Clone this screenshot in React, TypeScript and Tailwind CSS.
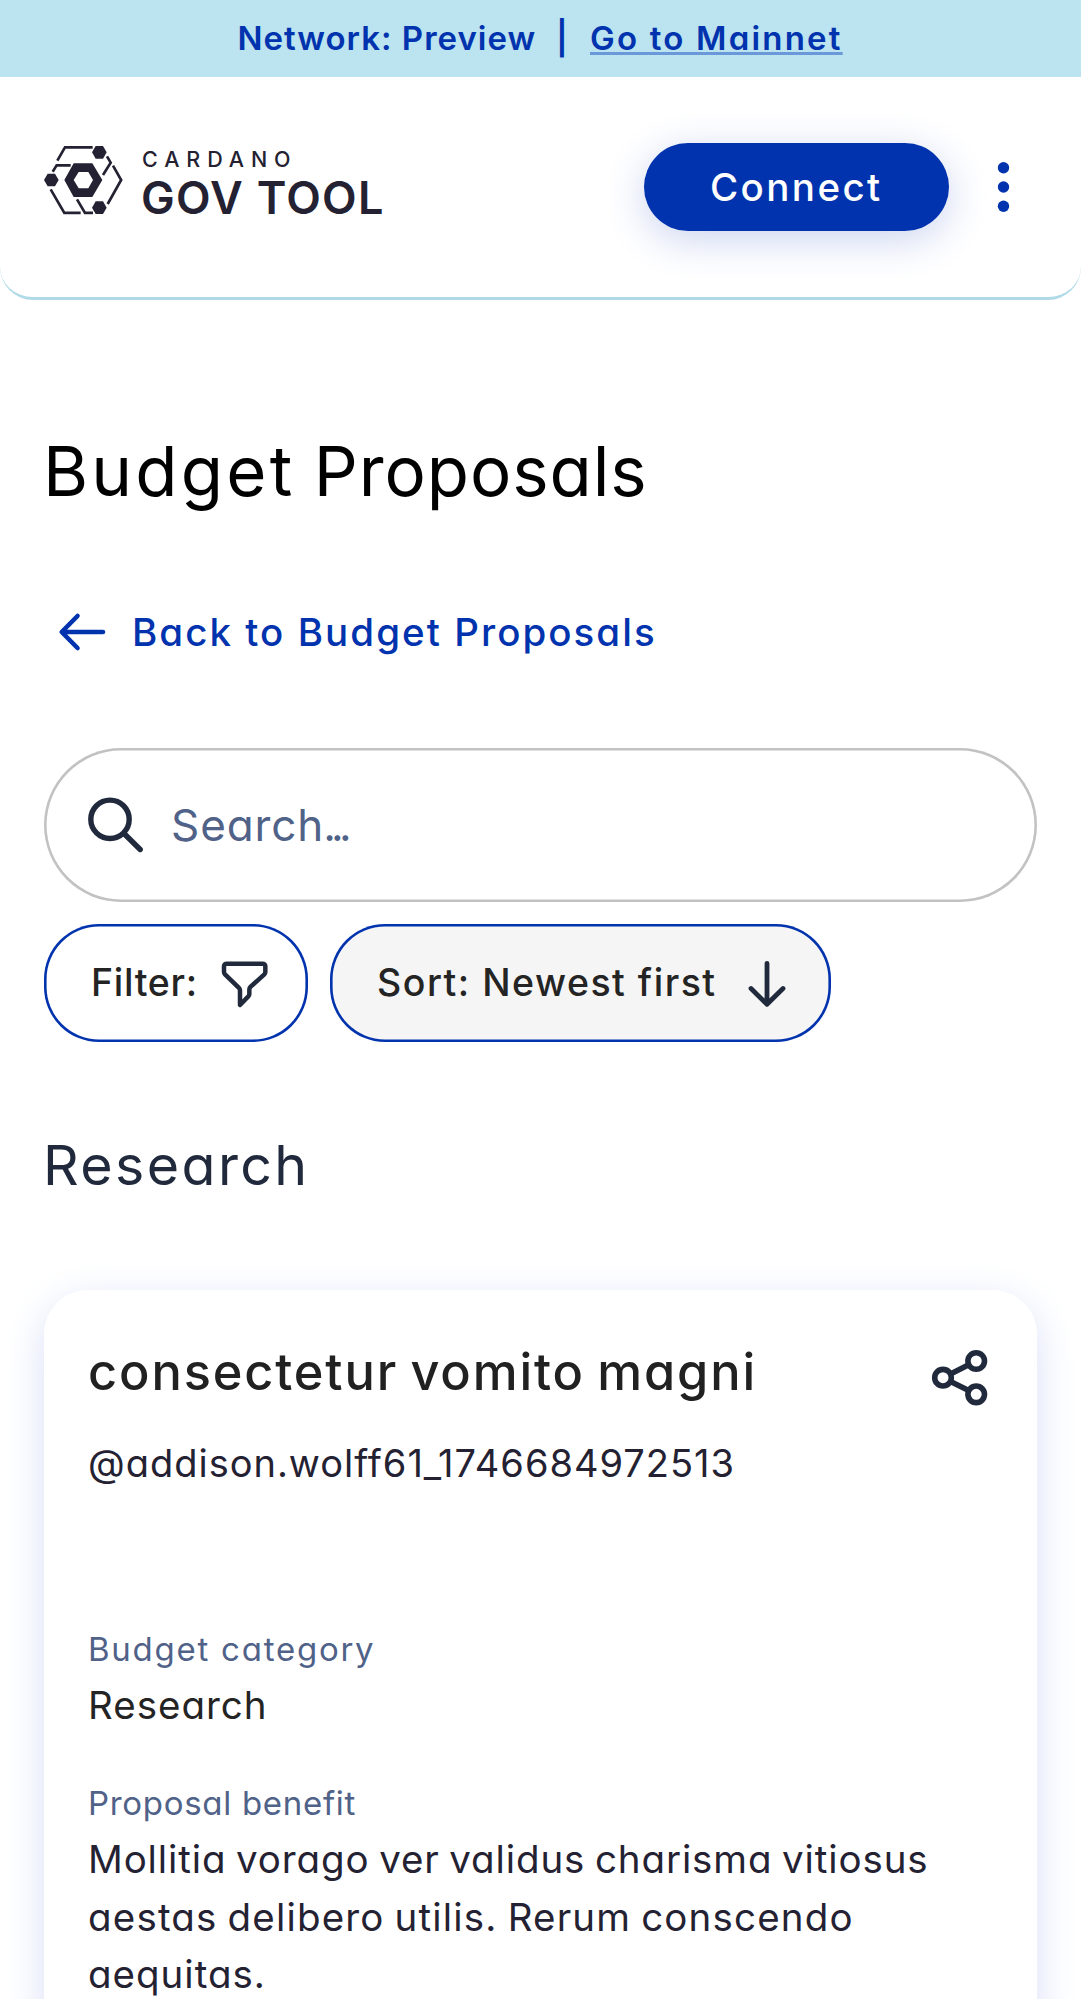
import React from "react";

function LogoMark() {
  return (
    <svg className="h-[80px] w-[86px] shrink-0" viewBox="12 0 258 240" fill="none" stroke="#242232" strokeWidth="8">
      <path d="M52 62 L75 22 H158" />
      <path d="M201 49 L212 68 L189 105" />
      <path d="M38 95 L50 76 H92" />
      <path d="M219 77 L243.500 120 L203 192" />
      <path d="M32 148 L73 218.500 H122" />
      <path d="M111 178 L135 218.500 H159" />
      <g fill="#242232" stroke="none">
        <path d="M156 37 L167 18 H189 L200 37 L189 56 H167 Z" />
        <path d="M156 203 L167 184 H189 L200 203 L189 222 H167 Z" />
        <path d="M12 120 L23 101 H45 L56 120 L45 139 H23 Z" />
        <path
          fillRule="evenodd"
          d="M73 120 L101 70 H157 L187 120 L157 171 H101 Z M101 120 L116 145 H145 L159 120 L145 96 H116 Z"
        />
      </g>
    </svg>
  );
}

function SearchIcon() {
  return (
    <svg className="h-[57px] w-[57px] shrink-0" viewBox="0 0 57 57" fill="none" stroke="#212a3d" strokeWidth="5.4" strokeLinecap="round">
      <circle cx="23" cy="23.300" r="19.200" />
      <path d="M37.500 38 L53.200 53.500" />
    </svg>
  );
}

function FunnelIcon() {
  return (
    <svg className="h-[65px] w-[60px] shrink-0" viewBox="0 0 180 195" fill="none" stroke="#212a3d" strokeWidth="13.500" strokeLinejoin="round">
      <path d="M35 41 H143 a8 8 0 0 1 8 8 V66 q0 4 -3 7 L107 110 q-4 4 -4 8 V132 q0 4 -3 7 L75 165 V121 q0 -4 -4 -8 L30 73 q-3 -3 -3 -7 V49 a8 8 0 0 1 8 -8 Z" />
    </svg>
  );
}

function ShareIcon() {
  return (
    <svg className="h-[57px] w-[57px] shrink-0" viewBox="0 0 57 57" fill="none" stroke="#212a3d" strokeWidth="5.6">
      <circle cx="12" cy="28.700" r="8.300" />
      <circle cx="45.200" cy="12" r="8.300" />
      <circle cx="45.200" cy="45.300" r="8.300" />
      <path d="M19.500 25 L37.700 15.800 M19.500 32.500 L37.700 41.500" />
    </svg>
  );
}

export default function App() {
  return (
    <div className="h-[1999px] w-[1081px] overflow-hidden bg-white font-['Inter',sans-serif] [font-feature-settings:'cv11'_1] whitespace-nowrap text-[#242232]">
      <div className="flex h-[77px] items-center bg-[#bbe3f0] pl-[237.5px] text-[33px] leading-[77px] font-semibold text-[#0033ad]">
        <span className="w-[318.500px] tracking-[1px]">Network: Preview</span>
        <span className="w-[34px]">|</span>
        <a className="tracking-[2.2px] underline decoration-[#6a98d8] decoration-[2.75px] underline-offset-[2px] [text-decoration-skip-ink:none]">
          Go to Mainnet
        </a>
      </div>

      <header className="flex h-[222.750px] items-start justify-between rounded-b-[33px] border-b-[3px] border-[#b0dae7] pr-[66px] pl-[44px]">
        <div className="flex pt-[63px]">
          <LogoMark />
          <div className="ml-[11px] pt-[7px]">
            <div className="h-[24px] pl-[1px] text-[21.500px] leading-[24px] font-medium tracking-[6.9px]">CARDANO</div>
            <div className="mt-[5px] h-[44px] text-[45px] leading-[44px] font-semibold tracking-[1.25px]">GOV TOOL</div>
          </div>
        </div>
        <div className="flex items-center pt-[65.750px]">
          <button className="flex h-[88px] w-[305.500px] items-center justify-center rounded-full bg-[#0033ad] pt-[2px] text-[38.500px] font-medium tracking-[2.4px] text-white shadow-[0_9px_41px_#ccd5f0]">
            Connect
          </button>
          <svg className="ml-[43px] h-[52px] w-[23px]" viewBox="0 0 23 52" fill="#0033ad">
            <circle cx="11.500" cy="6.800" r="5.700" />
            <circle cx="11.500" cy="26" r="5.700" />
            <circle cx="11.500" cy="45.300" r="5.700" />
          </svg>
        </div>
      </header>

      <main className="px-[44px]">
        <h1 className="mt-[131px] -ml-[1px] h-[80px] text-[69px] leading-[80px] text-black [word-spacing:-2px]">
          <span className="tracking-[3.2px]">Budget</span>
          <span className="tracking-[0.9px]"> Proposals</span>
        </h1>

        <a className="mt-[93px] flex h-[56px] items-center pl-[14px] text-[38.500px] leading-[56px] font-medium tracking-[2.05px] text-[#0033ad]">
          <svg className="mr-[25px] h-[40px] w-[49px]" viewBox="0 0 49 40" fill="none" stroke="#0033ad" strokeWidth="4.600" strokeLinecap="round" strokeLinejoin="round">
            <path d="M45 20 H4 M19.500 4 L3.700 20 L19.500 36" />
          </svg>
          Back to Budget Proposals
        </a>

        <div className="mt-[88px] flex h-[154px] items-center rounded-full pl-[43px] text-[44px] text-[#506288] shadow-[inset_0_0_0_2.6px_#c2c2c2]">
          <SearchIcon />
          <span className="ml-[27px] pt-[1px] tracking-[0.9px]">Search</span>
          <span className="-ml-[1px] pt-[1px] tracking-[-4.8px]">...</span>
        </div>

        <div className="mt-[22px] flex gap-[22px] text-[37.500px] font-medium text-[#242424]">
          <button className="flex h-[118.250px] w-[264px] items-center rounded-[55px] pl-[47px] shadow-[inset_0_0_0_2.6px_#0033ad]">
            <span className="w-[124px] text-left tracking-[0.7px]">Filter:</span>
            <FunnelIcon />
          </button>
          <button className="flex h-[118.250px] w-[500.500px] items-center rounded-[55px] bg-[#f5f5f5] pl-[47px] shadow-[inset_0_0_0_2.6px_#0033ad]">
            <span className="w-[369px] text-left tracking-[1.5px]">Sort: Newest first</span>
            <svg className="mt-[2px] h-[50px] w-[42px]" viewBox="0 0 42 50" fill="none" stroke="#212a3d" strokeWidth="4.800" strokeLinecap="round" strokeLinejoin="round">
              <path d="M21 4.300 V45 M5 29.500 L21 45.300 L37 29.500" />
            </svg>
          </button>
        </div>

        <h2 className="mt-[91px] -ml-[1px] h-[64px] text-[55.500px] leading-[64px] tracking-[2.4px] text-[#212a3d]">Research</h2>

        <article className="mt-[93px] h-[900px] rounded-[44px] bg-white px-[44px] pt-[50px] shadow-[0_11px_41px_#d9e0f7]">
          <div className="flex justify-between">
            <h3 className="h-[64px] text-[50.500px] leading-[64px] font-medium tracking-[1.87px] text-[#212121] [word-spacing:-3px]">consectetur vomito magni</h3>
            <div className="mr-[5px] h-[64px] pt-[9px]">
              <ShareIcon />
            </div>
          </div>
          <p className="mt-[30px] h-[58px] text-[38px] leading-[58px] tracking-[0.99px]">@addison.wolff61_1746684972513</p>

          <p className="mt-[132px] h-[50px] text-[33px] leading-[50px] tracking-[1.75px] text-[#506288]">Budget category</p>
          <p className="mt-[2px] h-[58px] text-[38.500px] leading-[58px] tracking-[1px] text-[#242424]">Research</p>

          <p className="mt-[44px] h-[50px] text-[33px] leading-[50px] tracking-[0.7px] text-[#506288]">Proposal benefit</p>
          <p className="mt-[3px] text-[38.500px] leading-[57.600px] [word-spacing:-2px]">
            <span className="block tracking-[0.88px]">Mollitia vorago ver validus charisma vitiosus</span>
            <span className="block tracking-[1.18px]">aestas delibero utilis. Rerum conscendo</span>
            <span className="block tracking-[1px]">aequitas.</span>
          </p>
        </article>
      </main>
    </div>
  );
}
